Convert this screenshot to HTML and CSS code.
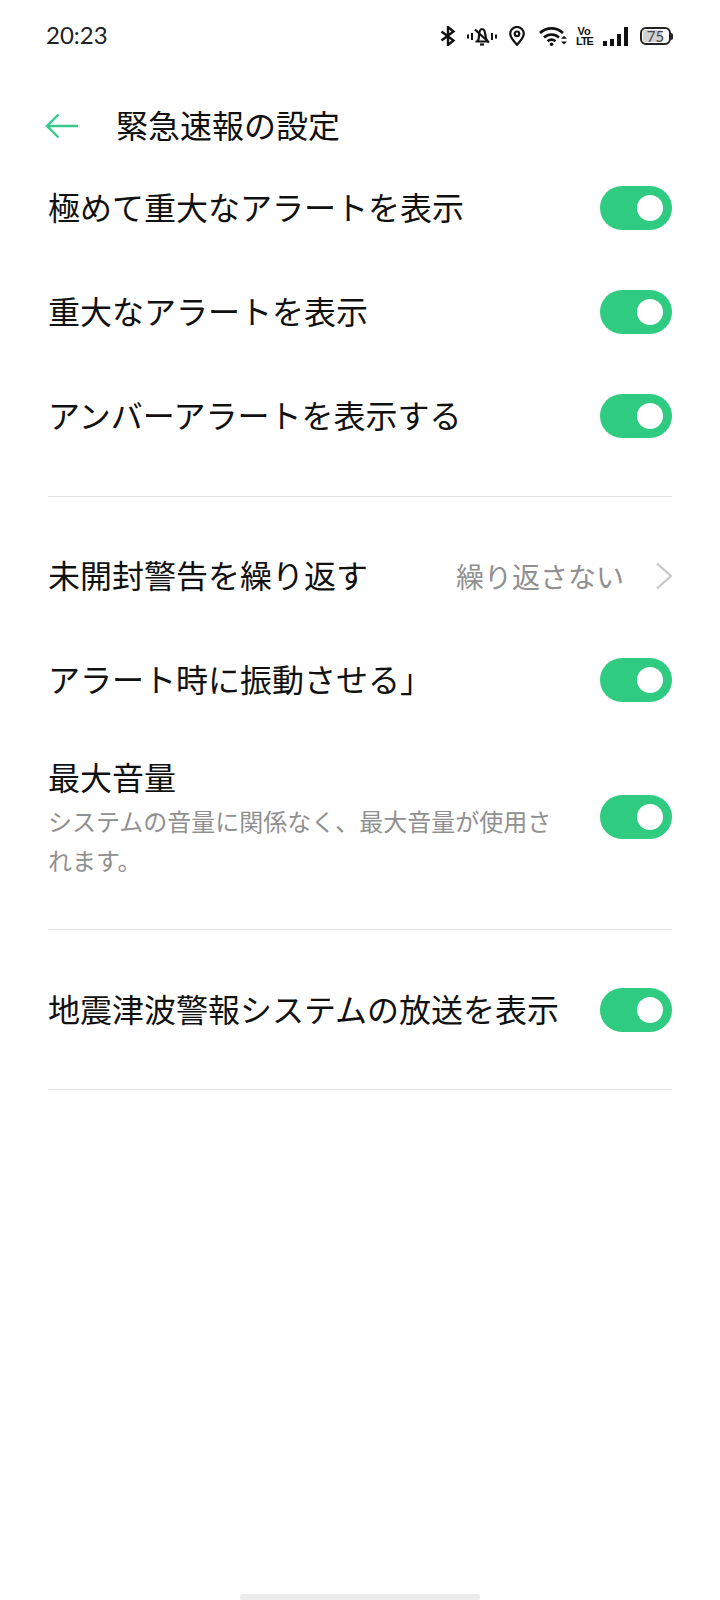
FILE: index.html
```html
<!DOCTYPE html>
<html lang="ja">
<head>
  <meta charset="utf-8">
  <title>緊急速報の設定</title>
  <link rel="stylesheet" href="styles.css">
</head>
<body>
  <div class="status-bar">
    <span class="time">20:23</span>
    <div class="status-icons">
      <!-- bluetooth -->
      <svg class="ic-bt" width="16" height="20" viewBox="0 0 16 20" fill="none" stroke="#111" stroke-width="2.4">
        <path d="M1.500 5.500L13.500 14.500 8 19V1L13.500 5.500 1.500 14.500"/>
      </svg>
      <!-- muted bell -->
      <svg class="ic-bell" width="30" height="20" viewBox="0 0 30 20" fill="none" stroke="#111" stroke-width="2.200">
        <path d="M1 8.500v4M5 7v7M25 7v7M29 8.500v4" stroke-width="2"/>
        <path d="M8.500 15.500h13M10.500 15.500c1.600-2 1.400-4 1.600-6.500c.2-3 1.400-6 2.900-6s2.900 2.500 3.200 5.200c.3 3 .7 5.300 2.300 7.300"/>
        <path d="M13 18.500h4"/>
        <path d="M8 3.500l14 13"/>
      </svg>
      <!-- location -->
      <svg class="ic-pin" width="16" height="20" viewBox="0 0 16 20" fill="none" stroke="#111" stroke-width="2.200">
        <path d="M8 18.800C4 14.500 1.200 11.200 1.200 7.800a6.800 6.800 0 0 1 13.600 0C14.800 11.200 12 14.500 8 18.800z"/>
        <circle cx="8" cy="7.800" r="2.300"/>
      </svg>
      <!-- wifi -->
      <svg class="ic-wifi" width="28" height="20" viewBox="0 0 28 20" fill="none" stroke="#111" stroke-width="2.600">
        <path d="M1 7C7.500 .8 17.500 .8 24 7"/>
        <path d="M5 11.500c4.500-4 10.500-4 15 0"/>
        <path d="M8.500 15.300c2.500-2 5.500-2 8 0"/>
        <circle cx="12.500" cy="18.200" r="1.800" fill="#111" stroke="none"/>
        <path d="M22 12.800l3-3 3 3z" fill="#111" stroke="none"/>
        <path d="M22 15.500l3 3 3-3z" fill="#111" stroke="none"/>
      </svg>
      <div class="volte"><div>Vo</div><div class="lte">LTE</div></div>
      <div class="signal">
        <i class="bar bar-1"></i>
        <i class="bar bar-2"></i>
        <i class="bar bar-3"></i>
        <i class="bar bar-4"></i>
      </div>
      <div class="battery">
        <div class="battery-body"><div class="battery-fill"></div><span class="battery-num">75</span></div>
        <div class="battery-cap"></div>
      </div>
    </div>
  </div>

  <div class="header">
    <svg class="back" width="34" height="26" viewBox="0 0 34 26" fill="none" stroke="#35c98a" stroke-width="2.400">
      <path d="M33 13H2M13.500 1.500L2 13l11.500 11.500"/>
    </svg>
    <h1 class="title">緊急速報の設定</h1>
  </div>

  <div class="section section-first">
    <div class="row">
      <span class="label">極めて重大なアラートを表示</span>
      <div class="switch"><div class="knob"></div></div>
    </div>
    <div class="row">
      <span class="label">重大なアラートを表示</span>
      <div class="switch"><div class="knob"></div></div>
    </div>
    <div class="row">
      <span class="label">アンバーアラートを表示する</span>
      <div class="switch"><div class="knob"></div></div>
    </div>
  </div>

  <div class="section section-second">
    <div class="row">
      <span class="label">未開封警告を繰り返す</span>
      <div class="value-wrap">
        <span class="value">繰り返さない</span>
        <svg class="chevron" width="18" height="28" viewBox="0 0 18 28" fill="none" stroke="#c6c6c6" stroke-width="2.200">
          <path d="M2 1.500L16 14 2 26.500"/>
        </svg>
      </div>
    </div>
    <div class="row">
      <span class="label">アラート時に振動させる」</span>
      <div class="switch"><div class="knob"></div></div>
    </div>
    <div class="row row-tall">
      <div class="text-block">
        <div class="label-top">最大音量</div>
        <div class="sub">システムの音量に関係なく、最大音量が使用されます。</div>
      </div>
      <div class="switch"><div class="knob"></div></div>
    </div>
  </div>

  <div class="section section-third">
    <div class="row">
      <span class="label">地震津波警報システムの放送を表示</span>
      <div class="switch"><div class="knob"></div></div>
    </div>
  </div>

  <div class="home-bar"></div>
</body>
</html>
```

FILE: styles.css
```css
* {
  box-sizing: border-box;
}

html, body {
  height: 100%;
}

body {
  margin: 0;
  background: #fff;
  color: #111;
  font-family: "Noto Sans CJK JP", "Noto Sans", sans-serif;
  display: flex;
  flex-direction: column;
  overflow: hidden;
}

/* status bar */
.status-bar {
  height: 72px;
  padding: 0 47px 0 46px;
  display: flex;
  align-items: center;
  justify-content: space-between;
}

.time {
  margin-bottom: 3px;
  font-family: Lato, "Open Sans", sans-serif;
  font-size: 24px;
  color: #222;
}

.status-icons {
  display: flex;
  align-items: center;
}

.ic-bell {
  margin-left: 11px;
}

.ic-pin {
  margin-left: 12px;
}

.ic-wifi {
  margin-left: 14px;
}

.volte {
  margin-left: 9px;
  width: 16px;
  text-align: center;
  font-family: "Liberation Sans", sans-serif;
  font-weight: 700;
  font-size: 11px;
  line-height: 10px;
  white-space: nowrap;
}

.lte {
  letter-spacing: -1px;
}

.signal {
  margin-left: 11px;
  display: flex;
  align-items: flex-end;
  gap: 3px;
  height: 20px;
}

.bar {
  display: block;
  width: 4px;
  background: #111;
}

.bar-1 { height: 5px; }
.bar-2 { height: 7px; }
.bar-3 { height: 12px; }
.bar-4 { height: 19px; }

.battery {
  margin-left: 12px;
  display: flex;
  align-items: center;
}

.battery-body {
  position: relative;
  width: 31px;
  height: 18px;
  border: 2px solid #222;
  border-radius: 6px;
  padding: 1px;
}

.battery-fill {
  width: 75%;
  height: 100%;
  background: #d2d2d2;
  border-radius: 2px;
}

.battery-num {
  position: absolute;
  top: 0;
  left: 0;
  right: 0;
  text-align: center;
  font-family: Lato, sans-serif;
  font-size: 15px;
  line-height: 14px;
  color: #444;
}

.battery-cap {
  width: 2px;
  height: 7px;
  background: #222;
  border-radius: 0 2px 2px 0;
}

/* header */
.header {
  height: 84px;
  padding: 22px 0 0 45px;
  display: flex;
  align-items: center;
}

.back {
  margin-top: 2px;
}

.title {
  margin: -2px 0 0 37px;
  font-size: 32px;
  font-weight: 400;
  line-height: 44px;
  color: #111;
}

/* settings list */
.section {
  margin: 0 48px;
  border-bottom: 1px solid #e2e2e2;
}

.section-first {
  padding-bottom: 28px;
}

.section-second {
  padding: 27px 0 32px;
}

.section-third {
  padding: 28px 0 27px;
}

.row {
  min-height: 104px;
  display: flex;
  align-items: center;
  justify-content: space-between;
}

.row-tall {
  margin-top: 1px;
  padding: 22px 0 18px;
}

.label {
  padding-bottom: 4px;
  font-size: 32px;
  line-height: 44px;
  color: #111;
}

.label-top {
  margin-bottom: 4px;
  font-size: 32px;
  line-height: 42px;
  color: #111;
}

.text-block {
  width: 510px;
}

.sub {
  font-size: 24px;
  line-height: 39px;
  color: #909090;
}

.value-wrap {
  display: flex;
  align-items: center;
}

.value {
  font-size: 28px;
  color: #909090;
}

.chevron {
  margin-left: 31px;
  margin-right: -1px;
}

/* toggle */
.switch {
  width: 72px;
  height: 44px;
  border-radius: 22px;
  background: #2ecb80;
  display: flex;
  align-items: center;
  justify-content: flex-end;
  padding-right: 9px;
}

.knob {
  width: 26px;
  height: 26px;
  border-radius: 50%;
  background: #fff;
}

/* gesture bar */
.home-bar {
  margin: auto auto 0;
  width: 240px;
  height: 6px;
  background: #ececec;
  border-radius: 2px;
}
```
